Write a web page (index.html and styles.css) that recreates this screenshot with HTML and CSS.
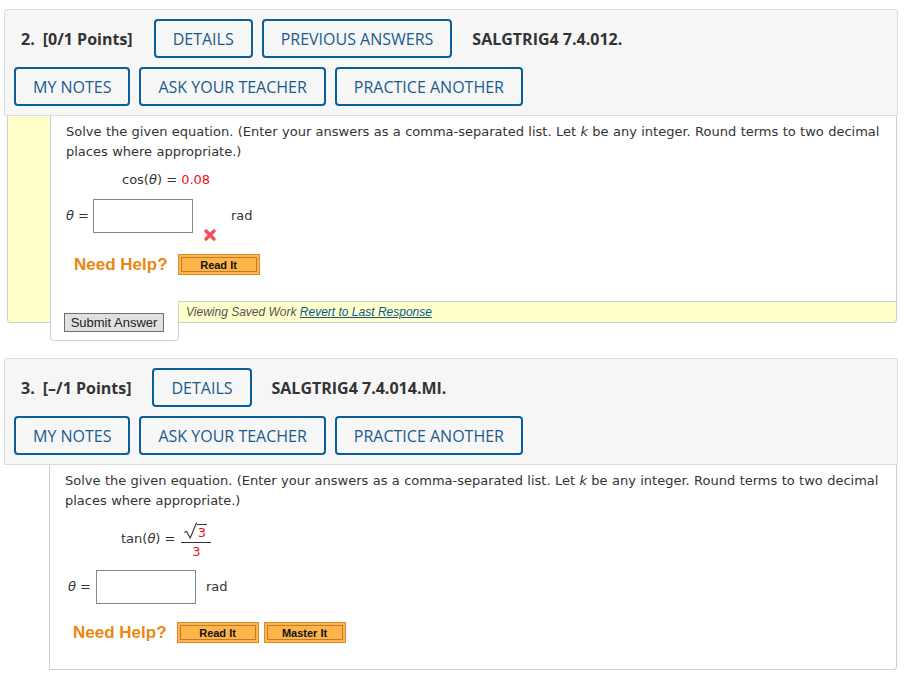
FILE: index.html
```html
<!DOCTYPE html>
<html>
<head>
<meta charset="utf-8">
<title>Questions</title>
<link rel="stylesheet" href="styles.css">
</head>
<body>
<div class="question">
  <div class="q-header">
    <div class="q-row">
      <span class="q-title"><span class="q-num">2.</span>[0/1 Points]</span>
      <button class="hbtn">DETAILS</button>
      <button class="hbtn">PREVIOUS ANSWERS</button>
      <span class="q-code">SALGTRIG4 7.4.012.</span>
    </div>
    <div class="q-row">
      <button class="hbtn">MY NOTES</button>
      <button class="hbtn">ASK YOUR TEACHER</button>
      <button class="hbtn">PRACTICE ANOTHER</button>
    </div>
  </div>
  <div class="q-body saved">
    <div class="q-strip"></div>
    <div class="q-main">
      <div class="q-content c1">
        <p class="prompt">Solve the given equation. (Enter your answers as a comma-separated list. Let <i>k</i> be any integer. Round terms to two decimal places where appropriate.)</p>
        <div class="eq">cos(<i>θ</i>) = <span class="red">0.08</span></div>
        <div class="answer">
          <span class="var"><i>θ</i> =</span>
          <input class="ans-input" type="text">
          <svg class="wrong" width="14" height="14" viewBox="0 0 14 14"><path d="M3 3 L11 11 M11 3 L3 11" stroke="#ef5057" stroke-width="3.4" stroke-linecap="round"/></svg>
          <span class="unit u1">rad</span>
        </div>
        <div class="help h1">
          <span class="help-label">Need Help?</span>
          <button class="obtn">Read It</button>
        </div>
      </div>
      <div class="q-foot">
        <div class="submit-cell"><button class="submit">Submit Answer</button></div>
        <div class="saved-bar">Viewing Saved Work <a class="revert" href="#">Revert to Last Response</a></div>
      </div>
    </div>
  </div>
</div>

<div class="question">
  <div class="q-header">
    <div class="q-row">
      <span class="q-title"><span class="q-num">3.</span>[–/1 Points]</span>
      <button class="hbtn">DETAILS</button>
      <span class="q-code">SALGTRIG4 7.4.014.MI.</span>
    </div>
    <div class="q-row">
      <button class="hbtn">MY NOTES</button>
      <button class="hbtn">ASK YOUR TEACHER</button>
      <button class="hbtn">PRACTICE ANOTHER</button>
    </div>
  </div>
  <div class="q-body plain">
    <div class="q-content c2">
      <p class="prompt">Solve the given equation. (Enter your answers as a comma-separated list. Let <i>k</i> be any integer. Round terms to two decimal places where appropriate.)</p>
      <div class="eq eq-frac">
        <span>tan(<i>θ</i>) =</span>
        <span class="frac">
          <span class="num"><svg class="radical" width="13" height="17" viewBox="0 0 13 17"><path d="M0.5 10.5 L2.6 9.4 L6.2 16 L12.6 0.5" fill="none" stroke="#333" stroke-width="1.1"/></svg><span class="radicand red">3</span></span>
          <span class="den red">3</span>
        </span>
      </div>
      <div class="answer a2">
        <span class="var"><i>θ</i> =</span>
        <input class="ans-input" type="text">
        <span class="unit u2">rad</span>
      </div>
      <div class="help h2">
        <span class="help-label">Need Help?</span>
        <button class="obtn">Read It</button>
        <button class="obtn">Master It</button>
      </div>
    </div>
  </div>
</div>
</body>
</html>
```
FILE: styles.css
```css
* { box-sizing: border-box; }

body {
  margin: 0;
  padding: 9px 14px 20px 4px;
  background: #fff;
  font-family: "DejaVu Sans", Verdana, sans-serif;
  color: #333;
}

.question { width: 894px; }
.question + .question { margin-top: 35px; }

.q-header {
  background: #f6f6f6;
  border: 1px solid #dcdcdc;
  border-radius: 3px 3px 0 0;
  padding: 9px;
  height: 107px;
}

.q-row {
  display: flex;
  align-items: center;
  gap: 9px;
  height: 39px;
}
.q-row + .q-row { margin-top: 9px; }

.q-title {
  font-family: "Open Sans", sans-serif;
  font-weight: 700;
  font-size: 16px;
  color: #333;
  margin: 0 12px 0 7px;
  white-space: nowrap;
}
.q-num { margin-right: 8px; }

.q-code {
  font-family: "Open Sans", sans-serif;
  font-weight: 700;
  font-size: 16px;
  color: #333;
  margin-left: 11px;
}

.hbtn {
  height: 39px;
  padding: 0 17px;
  border: 2px solid #0b5f99;
  border-radius: 4px;
  background: transparent;
  font-family: "Open Sans", sans-serif;
  font-size: 16px;
  font-weight: 500;
  color: #1a5b8e;
  white-space: nowrap;
}

/* body */
.q-body {
  margin: 0 1px 0 3px;
  border: 1px solid #cfcfcf;
  border-top: none;
  border-radius: 0 0 4px 4px;
}
.q-body.saved {
  display: flex;
  background: #ffffcc;
}
.q-body.plain {
  margin-left: 45px;
  background: #fff;
  border-radius: 0 0 4px 0;
}

.q-strip { width: 42px; flex: none; }
.q-main { flex: 1; display: flex; flex-direction: column; }

.q-content {
  padding: 6px 6px 0 15px;
  font-size: 13px;
  line-height: 20px;
}
.q-content.c1 {
  background: #fff;
  border-left: 1px solid #cfcfcf;
  height: 185px;
}
.q-content.c2 { height: 204px; }

.prompt {
  margin: 0;
  word-spacing: 0.25px;
}

.eq {
  margin: 8px 0 0 56px;
  height: 20px;
}
.red { color: #f0101c; }

.eq-frac {
  display: flex;
  align-items: center;
  height: 42px;
  margin-top: 7px;
}
.frac {
  display: inline-flex;
  flex-direction: column;
  align-items: center;
  margin-left: 6px;
  width: 30px;
  margin-top: 4px;
}
.num {
  display: flex;
  align-items: flex-end;
  justify-content: center;
  width: 30px;
  border-bottom: 1px solid #333;
  padding: 0 2px 2px 0;
}
.radical { display: block; margin-bottom: 1px; }
.radicand {
  border-top: 1px solid #333;
  line-height: 15px;
  padding: 0 1px 0 1px;
}
.den { line-height: 17px; }

.answer {
  display: flex;
  align-items: center;
  height: 34px;
  margin-top: 9px;
}
.answer.a2 { margin-top: 10px; padding-left: 3px; }
.var { margin-right: 4px; white-space: nowrap; }
.answer.a2 .var { margin-right: 5px; }
.ans-input {
  width: 100px;
  height: 34px;
  border: 1px solid #858585;
  background: #fff;
  margin: 0;
  padding: 0;
}
.wrong {
  align-self: flex-end;
  margin: 0 0 -9px 10px;
}
.unit.u1 { margin-left: 14px; }
.unit.u2 { margin-left: 10px; }

.help {
  display: flex;
  align-items: center;
  height: 23px;
  margin-top: 20px;
  padding-left: 8px;
}
.help.h2 { margin-top: 17px; }
.help-label {
  font-family: "Liberation Sans", Arial, sans-serif;
  font-weight: 700;
  font-size: 17px;
  color: #ec860f;
  margin-right: 10px;
}
.obtn {
  width: 82px;
  height: 21px;
  padding: 0;
  border: 1px solid #df8a30;
  background: #fdb54a;
  box-shadow: inset 0 0 0 2px #fdb54a, inset 0 0 0 3px #c47a2c;
  font-family: "Liberation Sans", Arial, sans-serif;
  font-weight: 700;
  font-size: 11px;
  color: #111;
}
.obtn + .obtn { margin-left: 5px; }

/* footer of saved question */
.q-foot {
  display: flex;
  align-items: flex-start;
}
.submit-cell {
  width: 129px;
  height: 40px;
  margin-bottom: -19px;
  background: #fff;
  border: 1px solid #cfcfcf;
  border-top: none;
  border-radius: 0 0 4px 4px;
  padding: 11px 0 0 13px;
  flex: none;
}
.submit {
  width: 100px;
  height: 19px;
  padding: 0;
  border: 1px solid #6f6f6f;
  background: #e1e1e1;
  font-family: "Liberation Sans", Arial, sans-serif;
  font-size: 13px;
  color: #222;
  line-height: 17px;
}
.saved-bar {
  flex: 1;
  height: 21px;
  border-top: 1px solid #cfcfcf;
  padding-left: 7px;
  font-family: "Liberation Sans", Arial, sans-serif;
  font-style: italic;
  font-size: 12px;
  line-height: 20px;
  color: #555;
}
.revert {
  color: #0d5a8a;
  text-decoration: underline;
}
```
